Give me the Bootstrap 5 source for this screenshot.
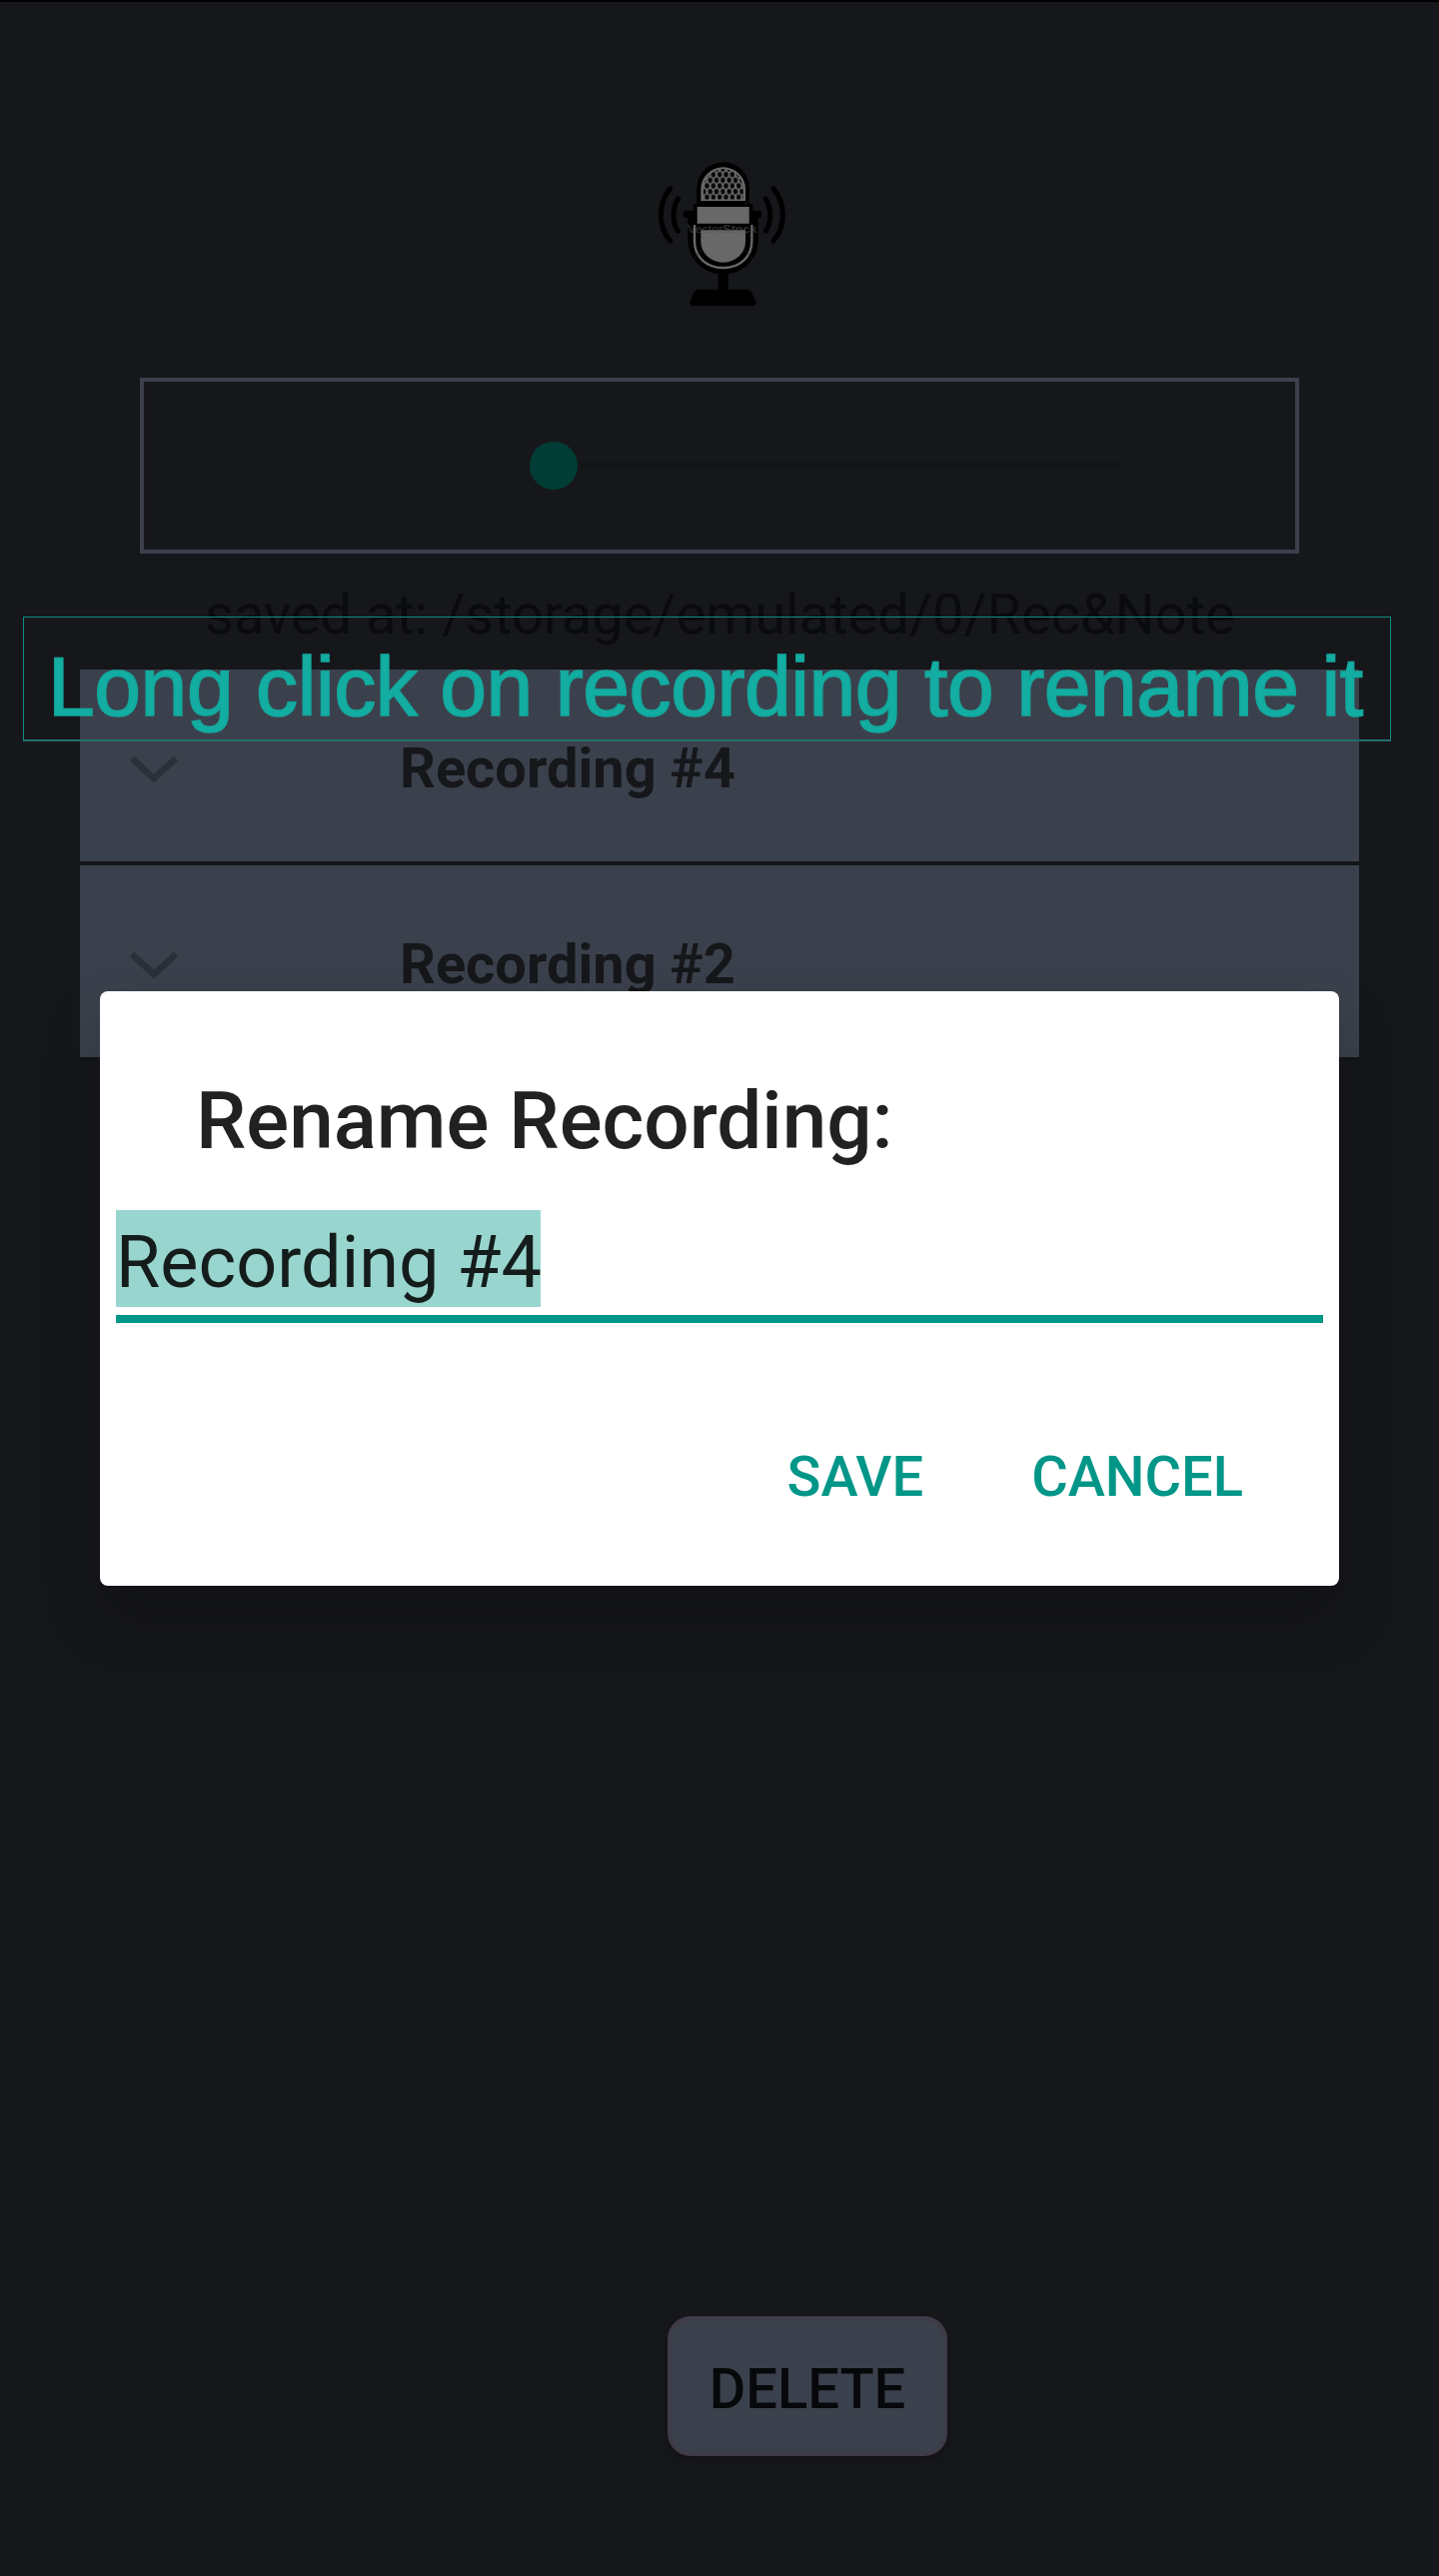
<!DOCTYPE html>
<html lang="en">
<head>
<meta charset="utf-8">
<meta name="viewport" content="width=device-width, initial-scale=1">
<title>Recordings</title>
<link href="https://cdn.jsdelivr.net/npm/bootstrap@5.3.0/dist/css/bootstrap.min.css" rel="stylesheet">
<style>
  body { background: #16171b; font-family: Roboto, "Liberation Sans", sans-serif; font-size: 56px; line-height: 66px; }
  .app-screen { height: 2578px; border-top: 2px solid #000; }
  .mic-icon { width: 160px; height: 170px; margin: 148px 0 0 640px; }
  .player-frame { width: 1160px; height: 176px; margin: 58px 0 0 140px; border: 4px solid #3b404c; padding-left: 386px; }
  .seek-thumb { width: 48px; height: 48px; background: #003d35; }
  .seek-track { width: 541px; height: 8px; background: #131416; }
  .saved-path { margin: 28px 0 0 205px; color: #0a0b0d; }
  .rec-list { width: 1280px; margin: 22px 0 0 80px; }
  .rec-row { height: 196px; background: #3b414c; border-bottom: 4px solid #131518; color: #16171a; padding-left: 49px; }
  .rec-row svg { width: 50px; height: 28px; margin: 8px 221px 0 0; }
  .rec-name { padding-top: 6px; }
  .delete-btn { width: 280px; height: 140px; margin: auto 0 120px 668px; padding: 6px 0 0; background: #3b414c; border: 4px solid #3f3b47; border-radius: 23px; color: #07080a; font-size: 56px; line-height: 66px; box-shadow: 0 4px 7px rgba(0,0,0,.22); }
  .medium-weight { font-weight: 500; }
  .rename-dialog { left: 100px; top: 992px; width: 1240px; height: 595px; border-radius: 8px; box-shadow: 0 32px 60px rgba(0,0,0,.23); padding: 83px 16px 0; }
  .dialog-heading { font-size: 80px; line-height: 94px; color: #212121; margin: 0 0 0 80px; }
  .name-field { margin-top: 42px; height: 113px; border-bottom: 8px solid #009688; font-size: 72px; color: #141d1b; }
  .picked { background: #99d5cf; height: 97px; width: 425px; padding-top: 11px; line-height: 84px; }
  .dialog-actions { margin-top: 121px; padding-right: 80px; gap: 108px; }
  .dialog-actions .btn { color: #009688; font-size: 56px; line-height: 66px; }
  .tip-banner { left: 23px; top: 617px; width: 1369px; height: 125px; border: 1px solid #118c81; border-bottom: 2px solid #246e6c; padding: 20px 0 0 24px; font-family: "Liberation Sans", Arial, sans-serif; font-size: 84px; line-height: 98px; letter-spacing: -.42px; color: #13ada2; -webkit-text-stroke: 1.7px #13a99e; }
</style>
</head>
<body>
<main class="app-screen position-relative d-flex flex-column overflow-hidden">
  <svg class="mic-icon flex-shrink-0" viewBox="0 0 480 510" aria-hidden="true">
    <defs>
      <pattern id="mesh" x="193" y="66" width="19" height="34" patternUnits="userSpaceOnUse">
        <ellipse cx="9.500" cy="8" rx="6.500" ry="8" fill="#060606"/>
        <ellipse cx="0" cy="25" rx="6.500" ry="8" fill="#060606"/>
        <ellipse cx="19" cy="25" rx="6.500" ry="8" fill="#060606"/>
      </pattern>
    </defs>
    <path d="M172 170V116a79 79 0 0 1 158 0V170Z" fill="#000"/>
    <path d="M184 153V117a67 65 0 0 1 134 0V153Z" fill="#686868"/>
    <path d="M192 149V117a58 58 0 0 1 119 0V149Z" fill="url(#mesh)"/>
    <path d="M162 162h178v20h20q7 0 7 11t-7 11h-3v68a106 104 0 0 1-91 101v46h58q8 0 12 7l12 26q5 15-10 16H162q-15-1-10-16l12-26q4-7 12-7h60v-46a106 104 0 0 1-91-101v-68h-8q-6 0-6-11t6-11h25Z" fill="#000"/>
    <path d="M173 171h156v50H173Z" fill="#686868"/>
    <path d="M184 241h134v34a67 63 0 0 1-134 0Z" fill="#686868"/>
    <path d="M165 225v47c0 52 38 82 86 82s86-30 86-82v-47" fill="none" stroke="#686868" stroke-width="7"/>
    <path d="M160 330l27-31M342 330l-27-31M312 166l18-17" stroke="#292929" stroke-width="2"/>
    <g fill="none" stroke="#000" stroke-width="15" stroke-linecap="round">
      <path d="M92 116q-28 34-28 79t28 78M116 147q-14 20-14 49t13 47M402 116q28 34 28 79t-28 78M378 147q14 20 14 49t-13 47"/>
    </g>
    <text x="144" y="250" font-family="Liberation Sans, sans-serif" font-size="33" textLength="208" lengthAdjust="spacingAndGlyphs" fill="#555" fill-opacity=".6">Vector<tspan font-weight="bold">Stock</tspan></text>
  </svg>

  <section class="player-frame d-flex align-items-center flex-shrink-0">
    <div class="seek-thumb rounded-circle"></div>
    <div class="seek-track"></div>
  </section>
  <div class="saved-path text-nowrap">saved at: /storage/emulated/0/Rec&amp;Note</div>

  <section class="rec-list">
    <div class="rec-row d-flex align-items-center">
      <svg viewBox="0 0 50 28" fill="none" stroke="#2b2f38" stroke-width="6.500" aria-hidden="true"><path d="M3 3l22 20L47 3"/></svg>
      <span class="rec-name fw-bold text-nowrap">Recording #4</span>
    </div>
    <div class="rec-row d-flex align-items-center">
      <svg viewBox="0 0 50 28" fill="none" stroke="#2b2f38" stroke-width="6.500" aria-hidden="true"><path d="M3 3l22 20L47 3"/></svg>
      <span class="rec-name fw-bold text-nowrap">Recording #2</span>
    </div>
  </section>

  <button type="button" class="delete-btn btn medium-weight">DELETE</button>
</main>

<section class="rename-dialog position-absolute bg-white" role="dialog" aria-label="Rename Recording">
  <h1 class="dialog-heading medium-weight">Rename Recording:</h1>
  <div class="name-field"><div class="picked text-nowrap">Recording #4</div></div>
  <div class="dialog-actions d-flex justify-content-end">
    <button type="button" class="btn p-0 border-0 medium-weight">SAVE</button>
    <button type="button" class="btn p-0 border-0 medium-weight">CANCEL</button>
  </div>
</section>

<div class="tip-banner position-absolute text-nowrap">Long click on recording to rename it</div>
<script src="https://cdn.jsdelivr.net/npm/bootstrap@5.3.0/dist/js/bootstrap.bundle.min.js"></script>
</body>
</html>
